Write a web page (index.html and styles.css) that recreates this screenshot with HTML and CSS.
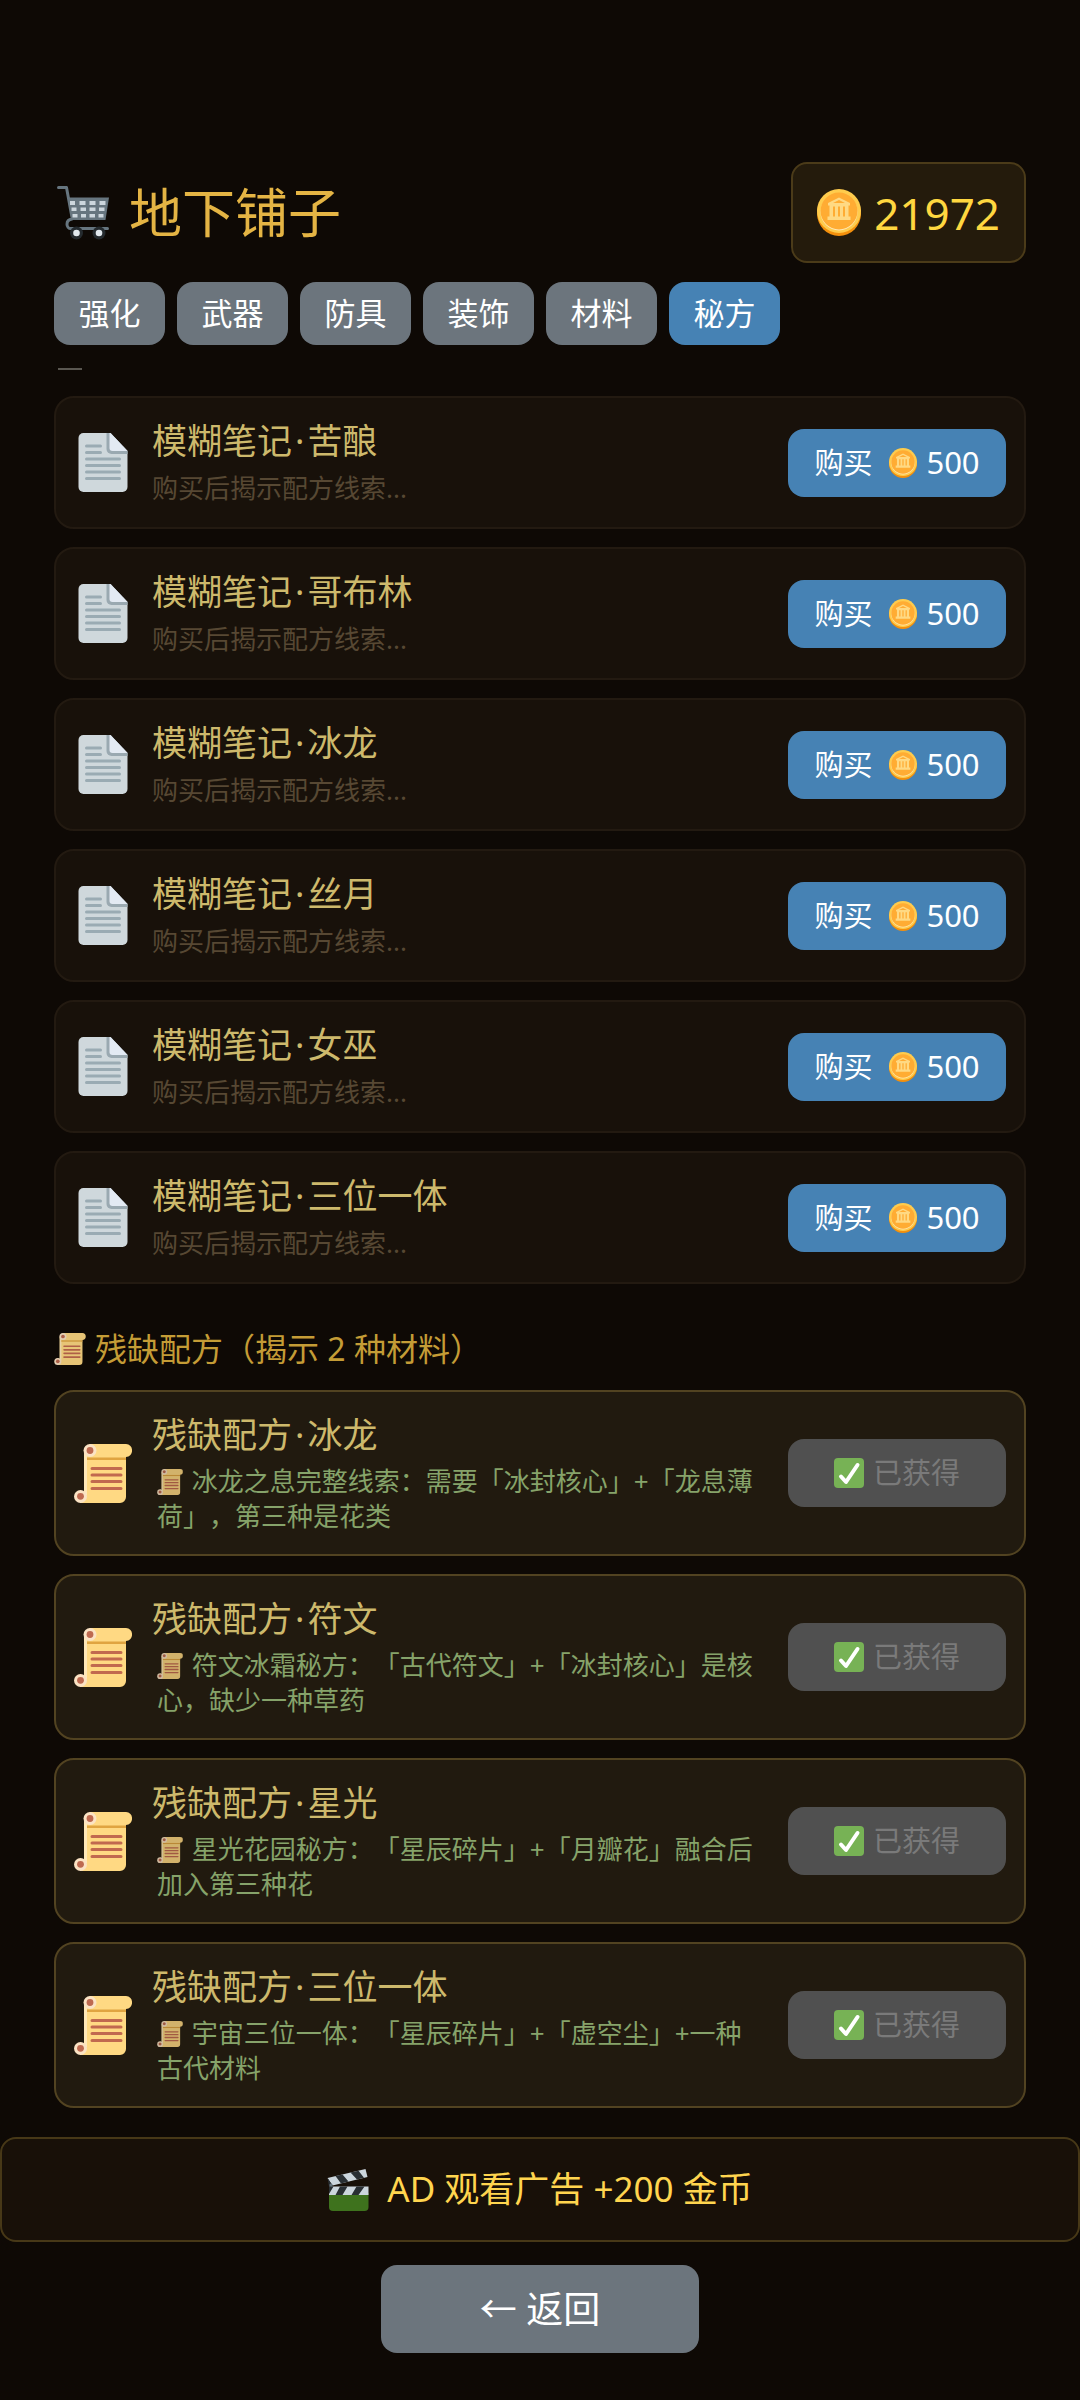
FILE: index.html
```html
<!DOCTYPE html>
<html lang="zh-CN">
<head>
<meta charset="utf-8">
<meta name="viewport" content="width=device-width, initial-scale=1">
<title>地下铺子</title>
<link rel="stylesheet" href="styles.css">
</head>
<body>
<svg class="sprite" aria-hidden="true">
  <symbol id="i-doc" viewBox="0 0 49 59">
    <path fill="#cfd8dc" d="M5 0H32L49 18V54a5 5 0 0 1-5 5H5a5 5 0 0 1-5-5V5a5 5 0 0 1 5-5z"/>
    <path fill="#9aa9b1" d="M28 0h4l17 18v3H33a5 5 0 0 1-5-5z"/>
    <path fill="#e3eaf3" d="M31 0h1l17 18H34a3 3 0 0 1-3-3z"/>
    <path stroke="#9aabb3" stroke-width="3" stroke-linecap="round" d="M8 13H22M8 19.500H22M8 26H41M8 32.500H41M8 39H41M8 45.500H41"/>
  </symbol>
  <symbol id="i-scroll" viewBox="0 0 58 59">
    <path fill="#ffd983" d="M10 7V59H46a6 6 0 0 0 6-6V13a6 6 0 0 0 6-6.500A6 6 0 0 0 52 0H16z"/>
    <path fill="#ffe8b8" d="M10 8h3V51h-3z"/>
    <path fill="#e0a440" d="M13 13.500H52V16H13z"/>
    <path fill="#ffd983" d="M6 46.500C12 47 13 53 12 59H6z"/>
    <circle cx="16" cy="6.500" r="6.500" fill="#fbe3c4"/><circle cx="16" cy="6.500" r="3.400" fill="#be6a50"/>
    <circle cx="6.500" cy="52.500" r="6.500" fill="#fbe3c4"/><circle cx="6.500" cy="52.300" r="3.400" fill="#be6a50"/>
    <path stroke="#c1694f" stroke-width="3" stroke-linecap="round" d="M18 24.500H47M18 31H47M18 37.500H47M18 44.500H47"/>
  </symbol>
  <symbol id="i-cart" viewBox="0 0 52 54">
    <path fill="#66757f" d="M11 11.500H52L48.500 34H15z"/>
    <path fill="none" stroke="#66757f" stroke-width="3" stroke-linejoin="round" stroke-linecap="round" d="M1.500 1.500H9.500L15 31.500M15 33C8 34 9 42.500 14 42.500H50.500"/>
    <g fill="#ccd6dd"><path d="M13 15h5v4h-5zM22.500 15h6v4h-6zM32.500 15h6v4h-6zM42.500 15h6v4h-6zM14.500 21.500h5v3.500h-5zM23.500 21.500h5.500v3.500h-5.500zM32.500 21.500h6v3.500h-6zM42 21.500h5.500v3.500H42zM15.500 28h5v3.500h-5zM24 28h5v3.500h-5zM32.500 28h5.500v3.500h-5.500zM41.500 28h5v3.500h-5z"/></g>
    <circle cx="19.500" cy="47" r="6.500" fill="#242a2e"/><circle cx="19.500" cy="47" r="3.300" fill="#e1e8ed"/>
    <circle cx="42" cy="47" r="6.500" fill="#242a2e"/><circle cx="42" cy="47" r="3.300" fill="#e1e8ed"/>
  </symbol>
  <symbol id="i-coin" viewBox="0 0 44 47">
    <ellipse cx="22" cy="24.500" rx="22" ry="22.500" fill="#f4900c"/>
    <circle cx="22" cy="22" r="22" fill="#ffcc4d"/>
    <circle cx="22" cy="23" r="18.500" fill="#ffe8b6"/>
    <circle cx="22" cy="22" r="18.500" fill="#ffac33"/>
    <path fill="#ffd983" d="M22 8.500L33 14V16.500H31.500V27.500H33.500V31H10.500V27.500H12.500V16.500H11V14z"/>
    <path fill="#ffac33" d="M22 11L28 14H16zM16 17.500h2v10h-2zM21 17.500h2v10h-2zM26 17.500h2v10h-2z"/>
  </symbol>
  <symbol id="i-check" viewBox="0 0 30 30">
    <rect width="30" height="30" rx="4" fill="#77b255"/>
    <path fill="none" stroke="#fff" stroke-width="4" stroke-linecap="round" stroke-linejoin="round" d="M7 18.500L12 24 23.500 7"/>
  </symbol>
  <symbol id="i-clap" viewBox="0 0 41 42">
    <path fill="#3e721d" d="M1.500 24H41V38a4 4 0 0 1-4 4H5.500a4 4 0 0 1-4-4z"/>
    <path fill="#ccd6dd" d="M1.500 17.500H41V26H1.500z"/>
    <path fill="#292f33" d="M1.500 17.500H6L1.500 25zM12.500 17.500H20L15 26H8zM29 17.500H37L31 26H24z"/>
    <path fill="#ccd6dd" d="M0 9L38 0L40 8L5 16.500z"/>
    <path fill="#292f33" d="M0 9L5 16.500L3 17.500H1.500zM8 7L15 5.500L21 12.500L13.500 14.500zM23 3.500L31 1.700L36.500 8.800L29.500 10.500z"/>
    <circle cx="3.500" cy="16" r="1.600" fill="#66757f"/>
  </symbol>
</svg>

<header class="header">
  <h1 class="title"><svg class="title-icon" aria-hidden="true"><use href="#i-cart"/></svg>地下铺子</h1>
  <div class="wallet"><svg class="wallet-icon" aria-hidden="true"><use href="#i-coin"/></svg>21972</div>
</header>

<nav class="tabs">
  <button class="tab" type="button">强化</button>
  <button class="tab" type="button">武器</button>
  <button class="tab" type="button">防具</button>
  <button class="tab" type="button">装饰</button>
  <button class="tab" type="button">材料</button>
  <button class="tab tab-active" type="button">秘方</button>
</nav>

<main class="shop">
  <div class="scrolled-edge"></div>
  <section class="list">
    <article class="card">
      <svg class="doc" aria-hidden="true"><use href="#i-doc"/></svg>
      <div class="info"><h3 class="name">模糊笔记<span class="dot">·</span>苦酿</h3><p class="teaser">购买后揭示配方线索...</p></div>
      <button class="buy" type="button">购买<svg class="buy-coin" aria-hidden="true"><use href="#i-coin"/></svg><span class="price">500</span></button>
    </article>
    <article class="card">
      <svg class="doc" aria-hidden="true"><use href="#i-doc"/></svg>
      <div class="info"><h3 class="name">模糊笔记<span class="dot">·</span>哥布林</h3><p class="teaser">购买后揭示配方线索...</p></div>
      <button class="buy" type="button">购买<svg class="buy-coin" aria-hidden="true"><use href="#i-coin"/></svg><span class="price">500</span></button>
    </article>
    <article class="card">
      <svg class="doc" aria-hidden="true"><use href="#i-doc"/></svg>
      <div class="info"><h3 class="name">模糊笔记<span class="dot">·</span>冰龙</h3><p class="teaser">购买后揭示配方线索...</p></div>
      <button class="buy" type="button">购买<svg class="buy-coin" aria-hidden="true"><use href="#i-coin"/></svg><span class="price">500</span></button>
    </article>
    <article class="card">
      <svg class="doc" aria-hidden="true"><use href="#i-doc"/></svg>
      <div class="info"><h3 class="name">模糊笔记<span class="dot">·</span>丝月</h3><p class="teaser">购买后揭示配方线索...</p></div>
      <button class="buy" type="button">购买<svg class="buy-coin" aria-hidden="true"><use href="#i-coin"/></svg><span class="price">500</span></button>
    </article>
    <article class="card">
      <svg class="doc" aria-hidden="true"><use href="#i-doc"/></svg>
      <div class="info"><h3 class="name">模糊笔记<span class="dot">·</span>女巫</h3><p class="teaser">购买后揭示配方线索...</p></div>
      <button class="buy" type="button">购买<svg class="buy-coin" aria-hidden="true"><use href="#i-coin"/></svg><span class="price">500</span></button>
    </article>
    <article class="card">
      <svg class="doc" aria-hidden="true"><use href="#i-doc"/></svg>
      <div class="info"><h3 class="name">模糊笔记<span class="dot">·</span>三位一体</h3><p class="teaser">购买后揭示配方线索...</p></div>
      <button class="buy" type="button">购买<svg class="buy-coin" aria-hidden="true"><use href="#i-coin"/></svg><span class="price">500</span></button>
    </article>
  </section>

  <h2 class="section-title"><svg class="section-icon" aria-hidden="true"><use href="#i-scroll"/></svg>残缺配方（揭示 2 种材料）</h2>

  <section class="list">
    <article class="card card-owned">
      <svg class="scroll" aria-hidden="true"><use href="#i-scroll"/></svg>
      <div class="info"><h3 class="name">残缺配方<span class="dot">·</span>冰龙</h3><p class="hint"><svg class="hint-icon" aria-hidden="true"><use href="#i-scroll"/></svg> 冰龙之息完整线索：需要「冰封核心」+「龙息薄荷」，第三种是花类</p></div>
      <button class="buy buy-done" type="button" disabled><svg class="done-icon" aria-hidden="true"><use href="#i-check"/></svg>已获得</button>
    </article>
    <article class="card card-owned">
      <svg class="scroll" aria-hidden="true"><use href="#i-scroll"/></svg>
      <div class="info"><h3 class="name">残缺配方<span class="dot">·</span>符文</h3><p class="hint"><svg class="hint-icon" aria-hidden="true"><use href="#i-scroll"/></svg> 符文冰霜秘方：「古代符文」+「冰封核心」是核心，缺少一种草药</p></div>
      <button class="buy buy-done" type="button" disabled><svg class="done-icon" aria-hidden="true"><use href="#i-check"/></svg>已获得</button>
    </article>
    <article class="card card-owned">
      <svg class="scroll" aria-hidden="true"><use href="#i-scroll"/></svg>
      <div class="info"><h3 class="name">残缺配方<span class="dot">·</span>星光</h3><p class="hint"><svg class="hint-icon" aria-hidden="true"><use href="#i-scroll"/></svg> 星光花园秘方：「星辰碎片」+「月瓣花」融合后加入第三种花</p></div>
      <button class="buy buy-done" type="button" disabled><svg class="done-icon" aria-hidden="true"><use href="#i-check"/></svg>已获得</button>
    </article>
    <article class="card card-owned">
      <svg class="scroll" aria-hidden="true"><use href="#i-scroll"/></svg>
      <div class="info"><h3 class="name">残缺配方<span class="dot">·</span>三位一体</h3><p class="hint"><svg class="hint-icon" aria-hidden="true"><use href="#i-scroll"/></svg> 宇宙三位一体：「星辰碎片」+「虚空尘」+一种古代材料</p></div>
      <button class="buy buy-done" type="button" disabled><svg class="done-icon" aria-hidden="true"><use href="#i-check"/></svg>已获得</button>
    </article>
  </section>
</main>

<footer class="footer">
  <button class="ad" type="button"><svg class="ad-icon" aria-hidden="true"><use href="#i-clap"/></svg>AD 观看广告 +200 金币</button>
  <button class="back" type="button">← 返回</button>
</footer>
</body>
</html>
```
FILE: styles.css
```css
* { box-sizing: border-box; margin: 0; }

body {
  min-height: 100vh;
  padding: 162px 0 47px;
  background: #0e0905;
  color: #fff;
  font-family: "Noto Sans", "Noto Sans CJK SC", sans-serif;
  font-weight: 400;
  line-height: 1.5;
  text-spacing-trim: space-all;
}

h1, h2, h3 { font-weight: inherit; }

button {
  border: 0;
  border-radius: 16px;
  padding: 0;
  color: inherit;
  font: inherit;
  cursor: pointer;
}

.sprite { position: absolute; width: 0; height: 0; }

.header {
  display: flex;
  align-items: center;
  justify-content: space-between;
  padding: 0 54px;
}

.title {
  display: flex;
  align-items: center;
  gap: 20px;
  padding-left: 3px;
  color: #e4b444;
  font-size: 53px;
}

.title-icon { width: 52px; height: 54px; }

.wallet {
  display: flex;
  align-items: center;
  gap: 13px;
  height: 101px;
  padding: 0 24px;
  border: 2px solid #4b3b19;
  border-radius: 16px;
  background: #241b0c;
  color: #ffd740;
  font-size: 44px;
}

.wallet-icon { width: 44px; height: 47px; }

.tabs {
  display: flex;
  gap: 12px;
  padding: 19px 54px 0;
}

.tab {
  min-width: 111px;
  height: 63px;
  background: #6c757d;
  font-size: 31px;
}

.tab-active { background: #4682b4; }

.shop { padding: 23px 54px 0; }

.scrolled-edge {
  width: 24px;
  height: 2px;
  margin: 0 4px 26px;
  background: #5a5751;
}

.list {
  display: flex;
  flex-direction: column;
  gap: 18px;
}

.card {
  display: flex;
  align-items: center;
  gap: 20px;
  padding: 20px 18px;
  border: 2px solid #231a11;
  border-radius: 20px;
  background: #18110a;
}

.card-owned {
  border-color: #524321;
  background: #211a0f;
}

.doc, .scroll {
  flex: none;
  width: 58px;
  height: 59px;
}

.info {
  display: flex;
  flex: 1;
  flex-direction: column;
  gap: 6px;
  min-width: 0;
}

.name {
  color: #cdb96c;
  font-size: 35px;
  line-height: 46px;
}

.dot { padding: 0 3px; }

.teaser {
  color: #574833;
  font-size: 26px;
  line-height: 37px;
}

.hint {
  padding: 0 6px 0 5px;
  color: #86a36a;
  font-size: 26px;
  line-height: 35px;
}

.hint-icon {
  width: 26px;
  height: 26px;
  margin-right: 2px;
  vertical-align: -4px;
  opacity: 0.8;
}

.buy {
  display: flex;
  flex: none;
  align-items: center;
  justify-content: center;
  width: 218px;
  height: 68px;
  background: #4682b4;
  font-size: 29px;
}

.buy-coin {
  width: 28px;
  height: 30px;
  margin: 0 9px 0 17px;
}

.price { font-size: 31px; }

.buy-done {
  gap: 9px;
  background: #505050;
  color: #7a7a7a;
}

.done-icon { width: 30px; height: 30px; }

.section-title {
  display: flex;
  align-items: center;
  gap: 9px;
  padding: 42px 0 18px;
  color: #c49c36;
  font-size: 32px;
  line-height: 46px;
}

.section-icon { width: 32px; height: 32px; opacity: 0.9; }

.footer {
  display: flex;
  flex-direction: column;
  align-items: center;
  gap: 23px;
  padding-top: 29px;
}

.ad {
  display: flex;
  align-items: center;
  justify-content: center;
  gap: 18px;
  width: 100%;
  height: 105px;
  border: 2px solid #473817;
  background: #181008;
  color: #ffd54f;
  font-size: 35px;
}

.ad-icon { width: 42px; height: 42px; }

.back {
  width: 318px;
  height: 88px;
  background: #6c757d;
  font-size: 37px;
}
```
